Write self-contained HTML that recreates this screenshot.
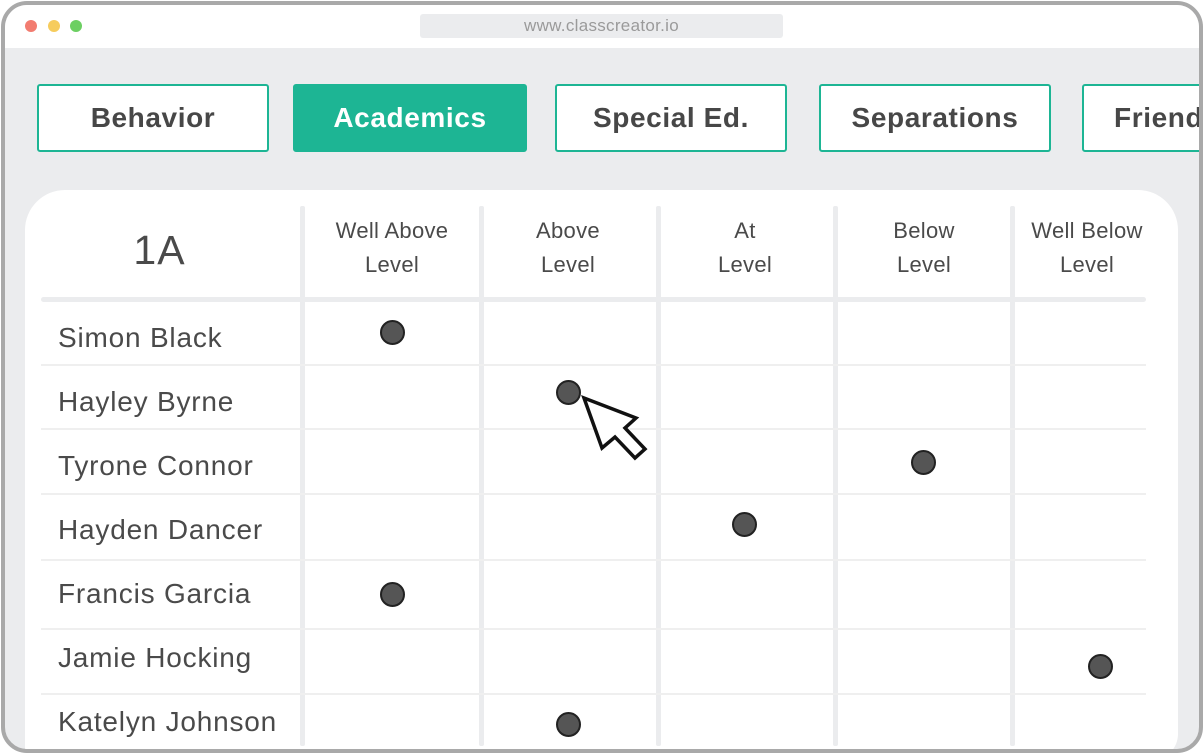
<!DOCTYPE html>
<html><head><style>
*{margin:0;padding:0;box-sizing:border-box}
body{width:1204px;height:755px;background:#fff;position:relative;overflow:hidden;font-family:"Liberation Sans",sans-serif;color:#4a4a4a}
.frame{position:absolute;left:1px;top:1px;width:1202px;height:752px;border:4px solid #a9a9a9;border-radius:26px;background:#ebecee;overflow:hidden}
.bar{position:absolute;left:0;top:0;width:100%;height:43px;background:#fff}
.dot{position:absolute;top:15px;width:12px;height:12px;border-radius:50%}
.url{position:absolute;left:415px;top:9px;width:363px;height:24px;background:#ebecee;border-radius:3px;text-align:center;font-size:17px;line-height:24px;color:#9a9a9a;letter-spacing:.3px}
.tab{position:absolute;top:79px;height:68px;width:232px;border:2px solid #1db594;border-radius:3px;background:#fff;font-weight:bold;font-size:28px;line-height:64px;text-align:center;color:#474747;letter-spacing:.6px}
.tab.on{background:#1db594;color:#fff}
.card{position:absolute;left:20px;top:185px;width:1153px;height:570px;background:#fff;border-radius:40px 40px 26px 0}
.v{position:absolute;top:206px;width:5px;height:540px;background:#ebecee;border-radius:2px}
.h{position:absolute;left:41px;width:1105px;height:2px;background:#efefef}
.hd{position:absolute;font-size:22px;line-height:34px;text-align:center;color:#4a4a4a;letter-spacing:.3px}
.nm{position:absolute;left:58px;font-size:28px;color:#4a4a4a;letter-spacing:.8px}
.d{position:absolute;width:25px;height:25px;border-radius:50%;background:#555;border:2px solid #222}
</style></head><body>
<div class="frame">
<div class="bar">
<div class="dot" style="left:20px;background:#f27c70"></div>
<div class="dot" style="left:43px;background:#f6cc5d"></div>
<div class="dot" style="left:65px;background:#6ccf62"></div>
<div class="url">www.classcreator.io</div>
</div>
<div class="tab" style="left:32px">Behavior</div>
<div class="tab on" style="left:288px;width:234px">Academics</div>
<div class="tab" style="left:550px">Special Ed.</div>
<div class="tab" style="left:814px">Separations</div>
<div class="tab" style="left:1077px;width:240px;text-align:left;padding-left:30px">Friends</div>
<div class="card"></div>
</div>
<div class="v" style="left:300px"></div>
<div class="v" style="left:479px"></div>
<div class="v" style="left:656px"></div>
<div class="v" style="left:833px"></div>
<div class="v" style="left:1010px"></div>
<div class="h" style="top:297px;height:5px;border-radius:3px;background:#ebecee"></div>
<div class="h" style="top:364px"></div>
<div class="h" style="top:428px"></div>
<div class="h" style="top:493px"></div>
<div class="h" style="top:559px"></div>
<div class="h" style="top:628px"></div>
<div class="h" style="top:693px"></div>
<div class="hd" style="left:30px;width:259px;top:225px;font-size:41px;line-height:50px;letter-spacing:1px">1A</div>
<div class="hd" style="left:305px;width:174px;top:214px">Well Above<br>Level</div>
<div class="hd" style="left:482px;width:172px;top:214px">Above<br>Level</div>
<div class="hd" style="left:659px;width:172px;top:214px">At<br>Level</div>
<div class="hd" style="left:838px;width:172px;top:214px">Below<br>Level</div>
<div class="hd" style="left:1015px;width:144px;top:214px">Well Below<br>Level</div>
<div class="nm" style="top:322px">Simon Black</div>
<div class="nm" style="top:386px">Hayley Byrne</div>
<div class="nm" style="top:450px">Tyrone Connor</div>
<div class="nm" style="top:514px">Hayden Dancer</div>
<div class="nm" style="top:578px">Francis Garcia</div>
<div class="nm" style="top:642px">Jamie Hocking</div>
<div class="nm" style="top:706px">Katelyn Johnson</div>
<div class="d" style="left:380px;top:320px"></div>
<div class="d" style="left:556px;top:380px"></div>
<div class="d" style="left:911px;top:450px"></div>
<div class="d" style="left:732px;top:512px"></div>
<div class="d" style="left:380px;top:582px"></div>
<div class="d" style="left:1088px;top:654px"></div>
<div class="d" style="left:556px;top:712px"></div>
<svg style="position:absolute;left:0;top:0" width="1204" height="755">
<polygon points="584,398 636,418 625,428 645,449 635,458 615,437 602,448" fill="#fff" stroke="#111" stroke-width="3.5" stroke-linejoin="miter"/>
</svg>
</body></html>
